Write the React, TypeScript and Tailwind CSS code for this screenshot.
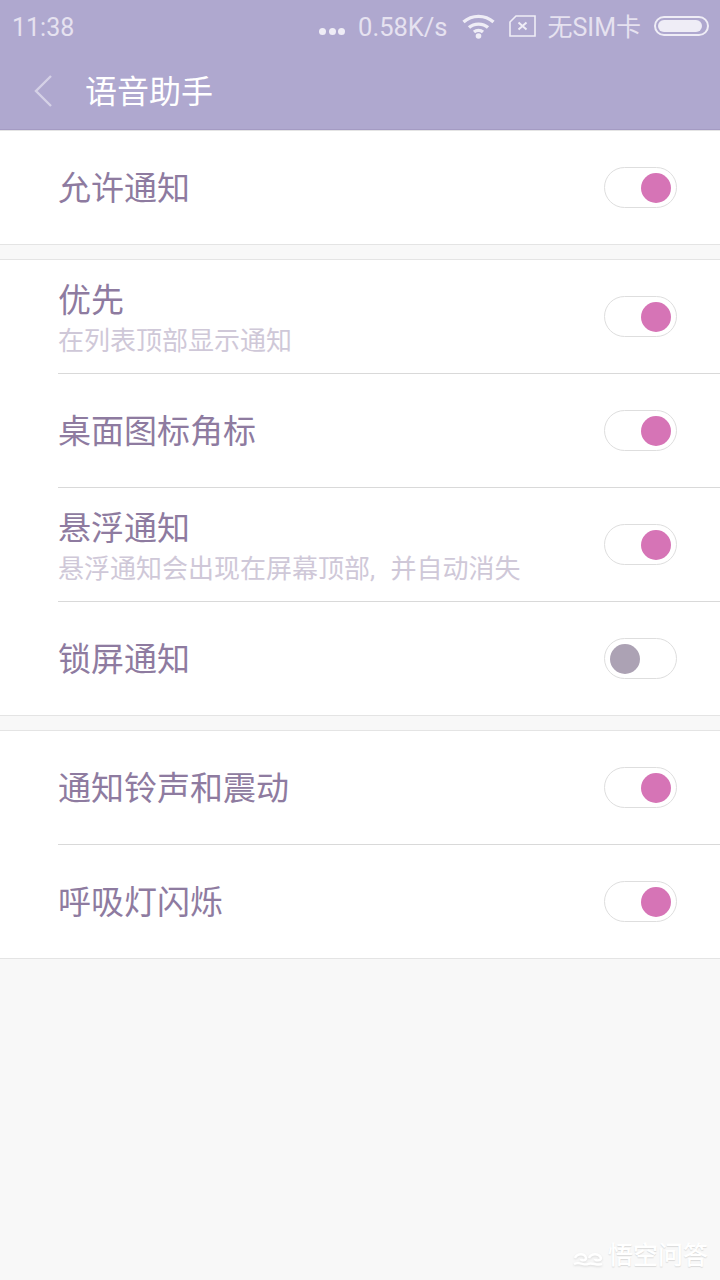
import React from 'react';

const FONT = "font-['Roboto','Noto_Sans_CJK_SC',sans-serif]";

const Toggle: React.FC<{ on: boolean }> = ({ on }) => (
  <div
    className={`flex h-[41px] w-[73px] shrink-0 items-center rounded-full border border-[#dedede] bg-white px-[5px] ${
      on ? 'justify-end' : 'justify-start'
    }`}
  >
    <div className={`h-[30px] w-[30px] rounded-full ${on ? 'bg-[#d674b6]' : 'bg-[#aca2b4]'}`} />
  </div>
);

interface RowProps {
  title: string;
  sub?: string;
  on?: boolean;
  divider?: boolean;
}

const Row: React.FC<RowProps> = ({ title, sub, on = true, divider = false }) => (
  <div className={`flex items-center pr-[43px] ${divider ? 'h-[114px] border-b border-[#d9d9d9]' : 'h-[113px]'}`}>
    <div className={`flex min-w-0 flex-1 flex-col ${sub ? 'pt-[4px]' : 'pt-[2px]'}`}>
      {/* text columns sit on the shared 58px inset */}
      <span className="text-[33px] leading-[38px] text-[#8e7ba0]">{title}</span>
      {sub && <span className="mt-[6px] text-[26px] leading-[30px] text-[#cfc8d8] [word-spacing:9px]">{sub}</span>}
    </div>
    <Toggle on={on} />
  </div>
);

const Section: React.FC<{ children: React.ReactNode }> = ({ children }) => (
  <div className="border-y border-[#e4e4e4] bg-white pl-[58px]">{children}</div>
);

const StatusBar = () => (
  <div className="flex h-[52px] items-center justify-between pl-[12px] pr-[11px] pt-[3px] text-[25px] text-[#e6e2f0]">
    <span>11:38</span>
    <div className="flex items-center">
      <div className="mt-[8px] flex gap-[2.5px]">
        <div className="h-[7px] w-[7px] rounded-full bg-[#efedf6]" />
        <div className="h-[7px] w-[7px] rounded-full bg-[#efedf6]" />
        <div className="h-[7px] w-[7px] rounded-full bg-[#efedf6]" />
      </div>
      <span className="ml-[13px] text-[25.5px]">0.58K/s</span>
      <svg className="mb-[3px] ml-[14px]" width="33" height="25" viewBox="0 0 33 25" fill="none" stroke="#efedf6" strokeWidth="3.4">
        <path d="M1.5 8C10 0.5 23 0.5 31.5 8" />
        <path d="M7 13.5C12 9 21 9 26 13.5" />
        <path d="M12 18C14.5 16 18.5 16 21 18" />
        <circle cx="16.5" cy="22" r="2.8" fill="#efedf6" stroke="none" />
      </svg>
      <svg className="mb-[3px] ml-[14px]" width="27" height="22" viewBox="0 0 27 22" fill="none" stroke="#efedf6" strokeWidth="1.6">
        <path d="M7 1H26V21H1V7Z" />
        <path d="M9.5 7.5L17.5 14.5M17.5 7.5L9.5 14.5" strokeWidth="2" />
      </svg>
      <span className="ml-[12px]">无SIM卡</span>
      <div className="mb-[3px] ml-[13px] flex h-[20px] w-[55px] items-center rounded-full border-2 border-[#efedf6] p-[2px]">
        <div className="h-full w-[44px] rounded-full bg-[#efedf6]" />
      </div>
    </div>
  </div>
);

export default function App() {
  return (
    <div className={`flex h-[1280px] w-[720px] flex-col overflow-hidden bg-[#f8f8f8] ${FONT}`}>
      <div className="h-[130px] shrink-0 border-b border-[#a49bc3] bg-[#afa8cf]">
        <StatusBar />
        <div className="flex h-[77px] items-center pl-[34px] pt-[2px]">
          <svg width="18" height="32" viewBox="0 0 18 32" fill="none" stroke="#d5d1e6" strokeWidth="2.4" className="-mt-[2px]">
            <path d="M17 1L2 16L17 31" />
          </svg>
          <span className="ml-[33px] text-[32px] text-white">语音助手</span>
        </div>
      </div>

      <Section>
        <Row title="允许通知" />
      </Section>

      <div className="mt-[14px]">
        <Section>
          <Row title="优先" sub="在列表顶部显示通知" divider />
          <Row title="桌面图标角标" divider />
          <Row title="悬浮通知" sub="悬浮通知会出现在屏幕顶部, 并自动消失" divider />
          <Row title="锁屏通知" on={false} />
        </Section>
      </div>

      <div className="mt-[14px]">
        <Section>
          <Row title="通知铃声和震动" divider />
          <Row title="呼吸灯闪烁" />
        </Section>
      </div>

      <div className="flex flex-1 items-end justify-end pb-[10px] pr-[12px]">
        <svg className="mb-[3px]" width="30" height="16" viewBox="0 0 30 16" fill="none" stroke="#ffffff" strokeWidth="2.4" style={{ filter: 'drop-shadow(0 1px 1px rgba(0,0,0,0.12))' }}>
          <path d="M2 7C4 2 12 2 13 7C13 10 8 10 8 8" />
          <path d="M16 7C18 2 26 2 28 7C28 10 22 10 22 8" />
          <path d="M1 13C7 10 11 15 15 13C19 11 24 15 29 13" />
        </svg>
        <span className="ml-[5px] text-[25px] font-medium leading-[28px] text-white [text-shadow:0_1px_1px_rgba(0,0,0,0.12)]">悟空问答</span>
      </div>
    </div>
  );
}
